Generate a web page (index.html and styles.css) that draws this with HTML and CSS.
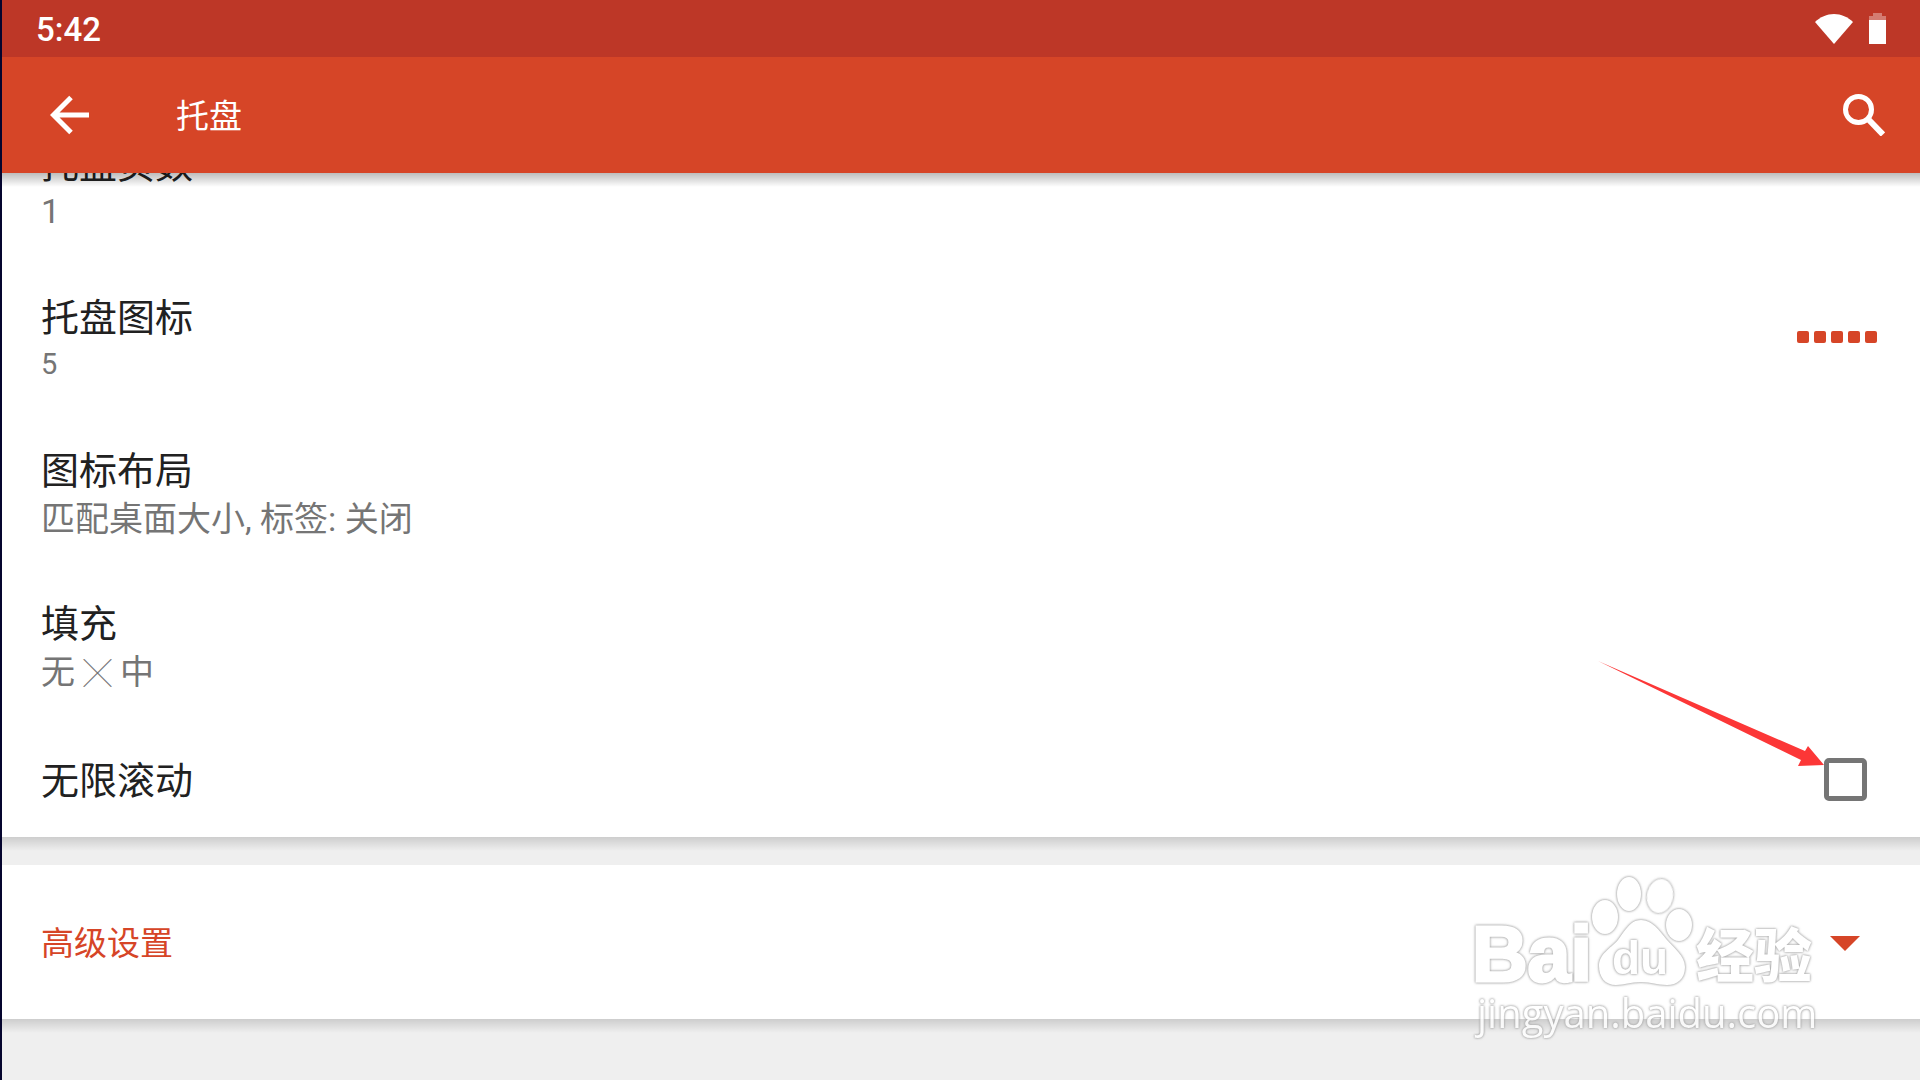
FILE: index.html
```html
<!DOCTYPE html>
<html lang="zh-CN">
<head>
    <meta charset="UTF-8">
    <meta name="viewport" content="width=device-width, initial-scale=1.0">
    <title>托盘</title>
    <link rel="stylesheet" href="styles.css">
</head>
<body>

    <div class="status-bar">
        <span class="clock">5:42</span>
        <div class="status-icons">
            <svg width="38" height="30" viewBox="0 0 38 30">
                <path d="M19 30L0 8C5 3 12 0 19 0s14 3 19 8z" fill="#fff"/>
            </svg>
            <svg width="17" height="31" viewBox="0 0 17 31">
                <path d="M4 0h9v3h4v5H0V3h4z" fill="#fff" opacity=".35"/>
                <path d="M0 7h17v24H0z" fill="#fff"/>
            </svg>
        </div>
    </div>

    <header class="toolbar">
        <button type="button" class="icon-button" aria-label="返回">
            <svg width="40" height="40" viewBox="0 0 40 40" fill="none" stroke="#fff" stroke-width="5">
                <path d="M39 20H5M21 2.500L3.500 20 21 37.500"/>
            </svg>
        </button>
        <h1>托盘</h1>
        <button type="button" class="icon-button" aria-label="搜索">
            <svg width="42" height="42" viewBox="0 0 42 42" fill="none" stroke="#fff">
                <circle cx="15.500" cy="15.500" r="13" stroke-width="5"/>
                <path d="M26 26l14 14.500" stroke-width="6"/>
            </svg>
        </button>
    </header>

    <main>
        <section class="card settings">
            <div class="row">
                <div>
                    <h2>托盘页数</h2>
                    <p class="count">1</p>
                </div>
            </div>
            <div class="row">
                <div>
                    <h2>托盘图标</h2>
                    <p class="count small">5</p>
                </div>
                <div class="dots"><i></i><i></i><i></i><i></i><i></i></div>
            </div>
            <div class="row">
                <div>
                    <h2>图标布局</h2>
                    <p>匹配桌面大小, 标签: 关闭</p>
                </div>
            </div>
            <div class="row">
                <div>
                    <h2>填充</h2>
                    <p>无 <span class="times">╳</span> 中</p>
                </div>
            </div>
            <div class="row check-row">
                <label for="infiniteScroll">无限滚动</label>
                <input type="checkbox" id="infiniteScroll">
                <svg class="pointer" width="250" height="130" viewBox="0 0 250 130">
                    <path d="M19 21L226 111 229 106 245 125 219 126 222 120z" fill="#fc3737"/>
                </svg>
            </div>
        </section>

        <section class="card">
            <button type="button" class="advanced">
                <span>高级设置</span>
                <svg width="30" height="15" viewBox="0 0 30 15">
                    <path d="M0 0h30L15 15z" fill="#d64527"/>
                </svg>
            </button>
        </section>
    </main>

    <!-- Watermark -->
    <svg class="watermark" width="370" height="190" viewBox="0 0 370 190">
        <text class="wm-bai" x="12" y="121">Bai</text>
        <ellipse cx="145" cy="57" rx="13" ry="17"/>
        <ellipse cx="169" cy="34" rx="12" ry="17"/>
        <ellipse cx="200" cy="36" rx="13" ry="17" transform="rotate(10 200 36)"/>
        <ellipse cx="219" cy="65" rx="13" ry="16"/>
        <path d="M181 60C192 60 199 70 207 80C214 88 225 96 225 107C225 119 217 125 207 125C196 125 192 122 181 122C170 122 165 125 156 125C145 125 139 117 139 106C139 94 150 89 158 80C165 71 170 60 181 60Z"/>
        <text class="wm-du" x="152" y="114">du</text>
        <text class="wm-cn" x="236" y="117">经验</text>
        <text class="wm-url" x="17" y="168">jingyan.baidu.com</text>
    </svg>

</body>
</html>
```
FILE: styles.css
```css
* {
    box-sizing: border-box;
}
body {
    margin: 0;
    min-height: 100vh;
    border-left: 2px solid #05052e;
    background: #efefef;
    color: #212121;
    font-family: Roboto, "Noto Sans CJK SC", sans-serif;
    position: relative;
    overflow: hidden;
}
h1, h2, p {
    margin: 0;
    font-weight: 400;
}
button {
    border: none;
    background: none;
    font-family: inherit;
    cursor: pointer;
}
svg {
    display: block;
}

/* Status bar */
.status-bar {
    display: flex;
    justify-content: space-between;
    align-items: center;
    height: 57px;
    padding: 0 34px;
    background: #bd3727;
    color: #fff;
}
.clock {
    font-size: 33px;
    font-weight: 500;
    line-height: 40px;
    padding-top: 3px;
}
.status-icons {
    display: flex;
    align-items: center;
    gap: 16px;
}

/* Toolbar */
.toolbar {
    display: flex;
    align-items: center;
    height: 116px;
    padding: 0 35px 0 48px;
    background: #d64527;
    color: #fff;
    position: relative;
    z-index: 1;
}
.toolbar::after, .card::after {
    content: "";
    position: absolute;
    left: 0;
    right: 0;
    top: 100%;
    height: 14px;
    background: linear-gradient(rgba(0, 0, 0, 0.26), rgba(0, 0, 0, 0));
}
.toolbar h1 {
    flex: 1;
    margin-left: 86px;
    padding-top: 3px;
    font-size: 33px;
    line-height: 48px;
}
.icon-button {
    padding: 0;
}

/* Setting cards */
main {
    overflow: hidden;
    padding-bottom: 20px;
}
.card {
    position: relative;
    margin-bottom: 28px;
    background: #fff;
}
.card::after {
    background: linear-gradient(rgba(0, 0, 0, 0.14), rgba(0, 0, 0, 0));
}
.settings {
    margin-top: -68px;
}
.row {
    display: flex;
    justify-content: space-between;
    align-items: flex-start;
    min-height: 153px;
    padding: 36px 43px 20px 39px;
}
.row h2, .row label {
    font-size: 38px;
    line-height: 48px;
}
.row p {
    font-size: 34px;
    line-height: 48px;
    color: #757575;
}
.row .count {
    line-height: 45px;
}
.row .small {
    font-size: 29px;
}
.times {
    font-size: 28px;
}
.dots {
    display: flex;
    gap: 5px;
    margin-top: 37px;
}
.dots i {
    width: 12px;
    height: 12px;
    border-radius: 2px;
    background: #d64527;
}
.check-row {
    position: relative;
    align-items: center;
    min-height: 118px;
    padding: 3px 53px 0 39px;
}
.check-row label {
    padding-top: 3px;
}
.check-row input {
    appearance: none;
    width: 43px;
    height: 43px;
    margin: 0;
    border: 5px solid #757575;
    border-radius: 5px;
    background: #fff;
}
.pointer {
    position: absolute;
    right: 91px;
    bottom: 67px;
}
.advanced {
    display: flex;
    justify-content: space-between;
    align-items: center;
    width: 100%;
    height: 154px;
    padding: 3px 60px 0 39px;
    color: #d64527;
    font-size: 33px;
    line-height: 48px;
}

.watermark {
    position: absolute;
    right: 90px;
    bottom: 30px;
    fill: #fff;
    opacity: 0.85;
}
.watermark * {
    filter: drop-shadow(0 0 1px #999) drop-shadow(0 0 1px #bbb);
}
.wm-bai {
    font: bold 77px "Liberation Sans", sans-serif;
    stroke: #fff;
    stroke-width: 3px;
}
.wm-du {
    font: bold 46px "Liberation Sans", sans-serif;
}
.wm-cn {
    font: 900 58px "Noto Sans CJK SC", sans-serif;
}
.wm-url {
    font: 40px "Open Sans", sans-serif;
}
```
